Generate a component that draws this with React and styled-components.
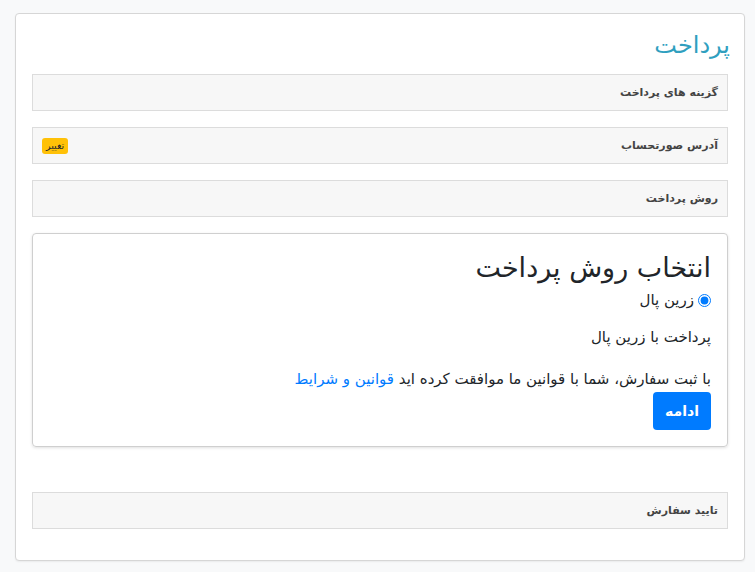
import React from "react";
import styled, { createGlobalStyle } from "styled-components";

const Global = createGlobalStyle`
  html, body { margin: 0; padding: 0; background: #f8f9fa; }
  body { font-family: "DejaVu Sans", "Noto Sans", sans-serif; color: #212529; }
  * { box-sizing: border-box; }
`;

const Page = styled.div`
  padding: 13px 10px 11px 15px;
  direction: rtl;
`;

const Card = styled.div`
  background: #fff;
  border: 1px solid #d6d6d6;
  border-radius: 4px;
  padding: 16px 16px 31px;
  box-shadow: 0 1px 2px rgba(0,0,0,0.06);
`;

const Title = styled.h2`
  margin: 0 -2px 14px 0;
  font-size: 24px;
  font-weight: 400;
  line-height: 30px;
  color: #2f9fbf;
`;

const Header = styled.div`
  display: flex;
  align-items: center;
  justify-content: space-between;
  height: 37px;
  padding: 0 9px;
  background: #f7f7f7;
  border: 1px solid #dcdcdc;
  font-size: 11px;
  font-weight: bold;
  color: #444;
  margin-top: ${(p) => p.$mt || 0}px;
`;

const Badge = styled.span`
  background: #ffc107;
  color: #212529;
  font-size: 9.5px;
  font-weight: 400;
  padding: 2px 4px;
  border-radius: 3px;
  line-height: 12px;
`;

const Box = styled.div`
  margin-top: 16px;
  border: 1px solid #cfcfcf;
  border-radius: 4px;
  padding: 14px 16px 16px;
  box-shadow: 0 1px 3px rgba(0,0,0,0.12);
  font-size: 15px;
  color: #212529;
`;

const BoxTitle = styled.h3`
  margin: 0;
  font-size: 27px;
  font-weight: 500;
  line-height: 40px;
`;

const RadioRow = styled.label`
  display: flex;
  align-items: center;
  gap: 4px;
  line-height: 22px;
  margin-top: 1px;
`;

const Radio = styled.input`
  margin: 0;
  width: 13px;
  height: 13px;
  accent-color: #007bff;
`;

const Para = styled.p`
  margin: 15px 0 0;
  line-height: 22px;
`;

const Terms = styled.p`
  margin: 20px 0 0;
  line-height: 22px;
`;

const Link = styled.a`
  color: #007bff;
  text-decoration: none;
`;

const Button = styled.button`
  display: block;
  margin-top: 2px;
  height: 38px;
  padding: 0 12px;
  border: none;
  border-radius: 4px;
  background: #007bff;
  color: #fff;
  font-family: inherit;
  font-size: 14px;
  font-weight: bold;
`;

export default function App() {
  return (
    <>
      <Global />
      <Page>
        <Card>
          <Title>پرداخت</Title>
          <Header>گزینه های پرداخت</Header>
          <Header $mt={16}>
            آدرس صورتحساب
            <Badge>تغییر</Badge>
          </Header>
          <Header $mt={16}>روش پرداخت</Header>
          <Box>
            <BoxTitle>انتخاب روش پرداخت</BoxTitle>
            <RadioRow>
              <Radio type="radio" defaultChecked name="pm" />
              زرین پال
            </RadioRow>
            <Para>پرداخت با زرین پال</Para>
            <Terms>
              با ثبت سفارش، شما با قوانین ما موافقت کرده اید <Link href="#">قوانین و شرایط</Link>
            </Terms>
            <Button>ادامه</Button>
          </Box>
          <Header $mt={45}>تایید سفارش</Header>
        </Card>
      </Page>
    </>
  );
}
